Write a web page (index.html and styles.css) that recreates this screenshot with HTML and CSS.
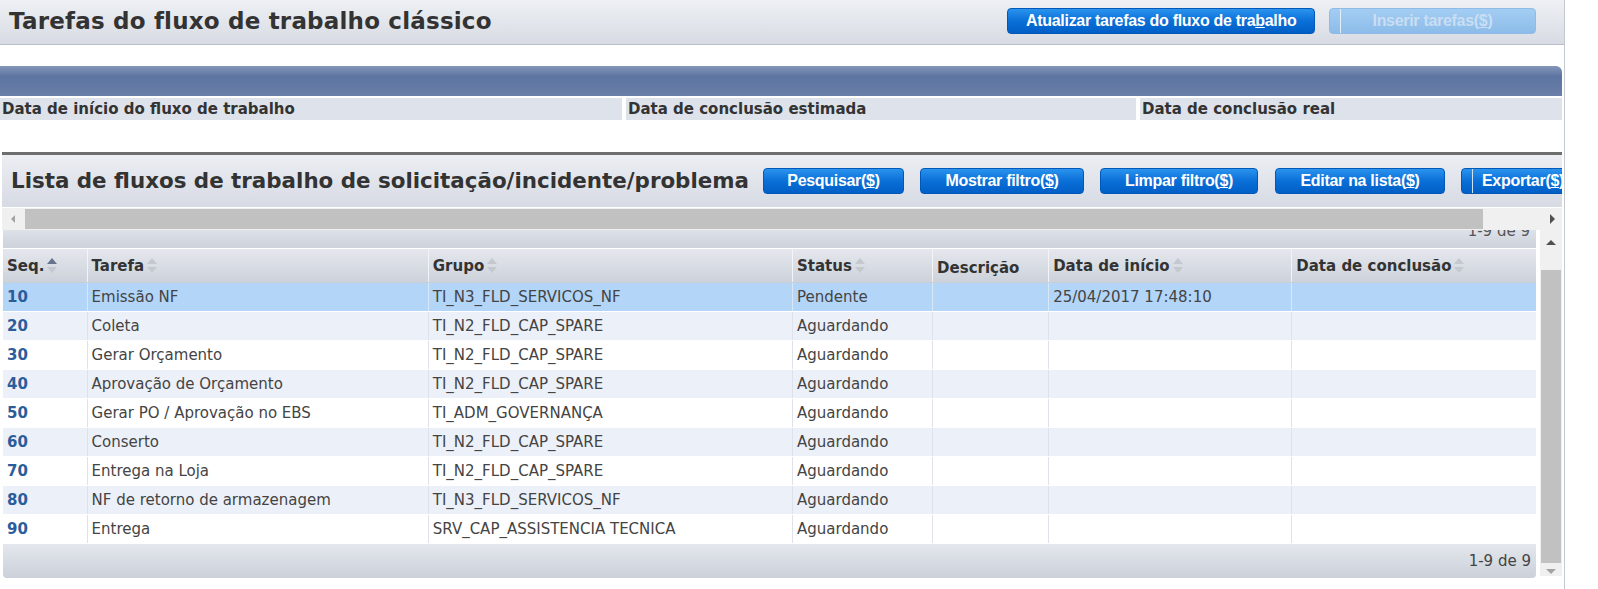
FILE: index.html
```html
<!DOCTYPE html>
<html>
<head>
    <title>Tarefas do fluxo de trabalho clássico</title>
    <link rel="stylesheet" href="styles.css">
</head>
<body>
<div class="page">
    <div class="topbar">
        <h1>Tarefas do fluxo de trabalho clássico</h1>
        <div class="actions">
            <button class="btn">Atualizar tarefas do fluxo de tra<u>b</u>alho</button>
            <button class="btn btn-split disabled"><span class="split"></span>Inserir tarefas(<u>$</u>)</button>
        </div>
    </div>

    <div class="bluebar"></div>

    <div class="dates">
        <div class="date-cell c1">Data de início do fluxo de trabalho</div>
        <div class="date-cell c2">Data de conclusão estimada</div>
        <div class="date-cell c3">Data de conclusão real</div>
    </div>

    <div class="list">
        <div class="list-head">
            <h2>Lista de fluxos de trabalho de solicitação/incidente/problema</h2>
            <button class="btn b-pesq">Pesquisar(<u>$</u>)</button>
            <button class="btn b-most">Mostrar filtro(<u>$</u>)</button>
            <button class="btn b-limp">Limpar filtro(<u>$</u>)</button>
            <button class="btn b-edit">Editar na lista(<u>$</u>)</button>
            <button class="btn btn-split b-exp"><span class="split"></span>Exportar(<u>$</u>)</button>
        </div>

        <div class="hscroll">
            <span class="arrow-left"></span>
            <div class="hthumb"></div>
            <span class="arrow-right"></span>
        </div>

        <div class="grid-area">
            <div class="grid">
                <div class="pager-top"><span>1-9 de 9</span></div>
                <table>
                    <colgroup>
                        <col style="width:84px">
                        <col style="width:341px">
                        <col style="width:364px">
                        <col style="width:140px">
                        <col style="width:116px">
                        <col style="width:243px">
                        <col style="width:244px">
                    </colgroup>
                    <thead>
                        <tr>
                            <th>Seq.<span class="sort asc"></span></th>
                            <th>Tarefa<span class="sort"></span></th>
                            <th>Grupo<span class="sort"></span></th>
                            <th>Status<span class="sort"></span></th>
                            <th class="nosort">Descrição</th>
                            <th>Data de início<span class="sort"></span></th>
                            <th>Data de conclusão<span class="sort"></span></th>
                        </tr>
                    </thead>
                    <tbody>
                        <tr class="selected"><td class="seq">10</td><td>Emissão NF</td><td>TI_N3_FLD_SERVICOS_NF</td><td>Pendente</td><td></td><td>25/04/2017 17:48:10</td><td></td></tr>
                        <tr><td class="seq">20</td><td>Coleta</td><td>TI_N2_FLD_CAP_SPARE</td><td>Aguardando</td><td></td><td></td><td></td></tr>
                        <tr><td class="seq">30</td><td>Gerar Orçamento</td><td>TI_N2_FLD_CAP_SPARE</td><td>Aguardando</td><td></td><td></td><td></td></tr>
                        <tr><td class="seq">40</td><td>Aprovação de Orçamento</td><td>TI_N2_FLD_CAP_SPARE</td><td>Aguardando</td><td></td><td></td><td></td></tr>
                        <tr><td class="seq">50</td><td>Gerar PO / Aprovação no EBS</td><td>TI_ADM_GOVERNANÇA</td><td>Aguardando</td><td></td><td></td><td></td></tr>
                        <tr><td class="seq">60</td><td>Conserto</td><td>TI_N2_FLD_CAP_SPARE</td><td>Aguardando</td><td></td><td></td><td></td></tr>
                        <tr><td class="seq">70</td><td>Entrega na Loja</td><td>TI_N2_FLD_CAP_SPARE</td><td>Aguardando</td><td></td><td></td><td></td></tr>
                        <tr><td class="seq">80</td><td>NF de retorno de armazenagem</td><td>TI_N3_FLD_SERVICOS_NF</td><td>Aguardando</td><td></td><td></td><td></td></tr>
                        <tr><td class="seq">90</td><td>Entrega</td><td>SRV_CAP_ASSISTENCIA TECNICA</td><td>Aguardando</td><td></td><td></td><td></td></tr>
                    </tbody>
                </table>
                <div class="pager-bottom">1-9 de 9</div>
            </div>
            <div class="vscroll">
                <span class="arrow-up"></span>
                <div class="vthumb"></div>
                <span class="arrow-down"></span>
            </div>
        </div>
    </div>
</div>
</body>
</html>
```

FILE: styles.css
```css
body {
    margin: 0;
    background-color: #fff;
    font-family: "DejaVu Sans", Verdana, sans-serif;
    color: #333;
}

.page {
    width: 1564px;
    border-right: 1px solid #c4c8cf;
    min-height: 589px;
}

/* top bar */
.topbar {
    height: 44px;
    display: flex;
    align-items: center;
    justify-content: space-between;
    background: linear-gradient(#eef0f4, #d7dbe3);
    border-bottom: 1px solid #b9bec9;
}

h1 {
    margin: 0 0 2px 9px;
    font-size: 23px;
    font-weight: bold;
    color: #333;
    letter-spacing: 0.2px;
}

.actions {
    display: flex;
    gap: 14px;
    margin-right: 28px;
    margin-bottom: 2px;
}

.btn {
    position: relative;
    height: 26px;
    padding: 0 18px;
    border: 1px solid #0058b8;
    border-radius: 4px;
    background: linear-gradient(#2a93ee, #0a6fd8 50%, #005fc6);
    color: #fff;
    font-family: "Liberation Sans Narrow", "Liberation Sans", Arial, sans-serif;
    font-weight: bold;
    font-size: 16px;
    letter-spacing: -0.3px;
    cursor: pointer;
    white-space: nowrap;
}

.btn-split .split {
    position: absolute;
    left: 10px;
    top: 0;
    bottom: 0;
    width: 1px;
    background-color: #cfe3f7;
}

.topbar .btn:first-child {
    width: 308px;
}

.disabled {
    width: 207px;
    border-color: #8fbbe6;
    background: linear-gradient(#a3cdf3, #8cbce9);
    color: #c9def3;
}

.disabled .split {
    background-color: #e4effa;
}

/* blue band */
.bluebar {
    margin-top: 21px;
    height: 30px;
    width: 1562px;
    border-top-right-radius: 6px;
    background: linear-gradient(#8497b9, #5c74a1 35%, #6a7fa7);
}

.dates {
    display: flex;
    gap: 4px;
    width: 1562px;
    margin-top: 2px;
}

.date-cell {
    height: 22px;
    line-height: 22px;
    background-color: #dee2ea;
    font-size: 15px;
    font-weight: bold;
    padding-left: 2px;
    box-sizing: border-box;
}

.c1 { width: 622px; }
.c2 { width: 510px; }
.c3 { width: 422px; }

/* list section */
.list {
    margin: 32px 0 0 2px;
    width: 1560px;
    border-top: 3px solid #6e6e6e;
}

.list-head {
    height: 52px;
    display: flex;
    align-items: center;
    background: linear-gradient(#eceef3, #d6dae3);
    overflow: hidden;
}

h2 {
    flex: none;
    width: 752px;
    margin: 0 0 2px 9px;
    font-size: 21.4px;
    font-weight: bold;
    color: #333;
    white-space: nowrap;
}

.list-head .btn {
    flex-shrink: 0;
    margin-right: 16px;
    padding: 0;
}

.b-pesq { width: 141px; }
.b-most { width: 164px; }
.b-limp { width: 158px; }
.list-head .b-edit { width: 170px; margin-right: 16px; }
.list-head .b-limp { margin-right: 17px; }
.b-exp { width: 120px; text-align: left; padding-left: 20px !important; }

/* horizontal scrollbar */
.hscroll {
    height: 22px;
    display: flex;
    align-items: center;
    background-color: #f0f0f0;
    border-top: 1px solid #fff;
}

.arrow-left {
    width: 0;
    height: 0;
    margin: 0 10px 0 9px;
    border-top: 4px solid transparent;
    border-bottom: 4px solid transparent;
    border-right: 4px solid #a3a3a3;
}

.hthumb {
    width: 1458px;
    height: 20px;
    background-color: #c1c1c1;
}

.arrow-right {
    width: 0;
    height: 0;
    margin-left: 67px;
    border-top: 5px solid transparent;
    border-bottom: 5px solid transparent;
    border-left: 5px solid #505050;
}

/* grid */
.grid-area {
    display: flex;
    align-items: flex-start;
}

.grid {
    width: 1533px;
    margin-left: 1px;
}

.pager-top {
    height: 18px;
    overflow: hidden;
    background: linear-gradient(#dde1e8, #cdd2db);
    text-align: right;
    font-size: 15px;
    color: #555;
    border-bottom: 1px solid #fff;
}

.pager-top span {
    display: block;
    margin-top: -8px;
    padding-right: 6px;
}

table {
    width: 1533px;
    border-collapse: collapse;
    table-layout: fixed;
    font-size: 15px;
}

th {
    height: 29px;
    padding: 0 4px;
    text-align: left;
    font-weight: bold;
    color: #333;
    background: linear-gradient(#e4e7ed, #cdd2da);
    border-left: 1px solid #f2f4f7;
    border-bottom: 1px solid #c9cdd5;
    white-space: nowrap;
}

th:first-child {
    border-left: none;
}

th.nosort {
    padding-top: 4px;
}

.sort {
    display: inline-block;
    position: relative;
    width: 11px;
    height: 15px;
    margin-left: 3px;
    vertical-align: -2px;
}

.sort::before,
.sort::after {
    content: "";
    position: absolute;
    left: 0;
    border-left: 5.5px solid transparent;
    border-right: 5.5px solid transparent;
}

.sort::before {
    top: 0;
    border-bottom: 6px solid #c4c8cf;
}

.sort::after {
    bottom: 0;
    border-top: 6px solid #c4c8cf;
}

.sort.asc::before {
    border-bottom-color: #65748d;
}

td {
    height: 28px;
    padding: 0 4px;
    color: #444;
    border-left: 1px solid #dfe2e8;
    border-bottom: 1px solid #fff;
    white-space: nowrap;
    overflow: hidden;
}

td:first-child {
    border-left: none;
}

tbody tr:nth-child(odd) td {
    background-color: #fff;
}

tbody tr:nth-child(even) td {
    background-color: #ecf0f8;
}

tbody tr.selected td {
    background-color: #b2d5f8;
    border-left-color: #d9e8f8;
}

td.seq {
    font-weight: bold;
    color: #2b5d9b;
}

.pager-bottom {
    height: 34px;
    line-height: 34px;
    text-align: right;
    padding-right: 5px;
    font-size: 15px;
    color: #444;
    background: linear-gradient(#e4e7ed, #cbd0d9);
    border-bottom-left-radius: 4px;
    border-bottom-right-radius: 4px;
}

/* vertical scrollbar */
.vscroll {
    width: 22px;
    height: 346px;
    margin-left: 4px;
    background-color: #f0f0f0;
    display: flex;
    flex-direction: column;
    align-items: center;
}

.arrow-up {
    width: 0;
    height: 0;
    margin-top: 10px;
    border-left: 5px solid transparent;
    border-right: 5px solid transparent;
    border-bottom: 5px solid #505050;
}

.vthumb {
    width: 20px;
    height: 293px;
    margin-top: 25px;
    background-color: #c1c1c1;
}

.arrow-down {
    width: 0;
    height: 0;
    margin-top: 6px;
    border-left: 5px solid transparent;
    border-right: 5px solid transparent;
    border-top: 5px solid #a3a3a3;
}
```
